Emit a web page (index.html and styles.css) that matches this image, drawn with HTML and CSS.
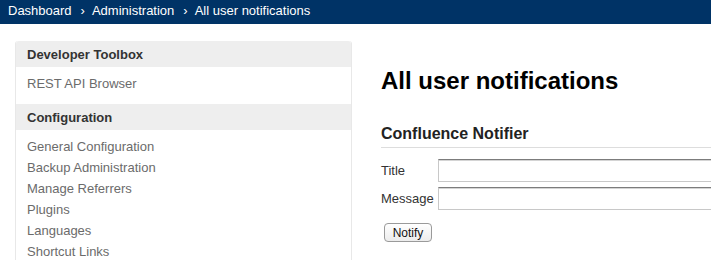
FILE: index.html
```html
<!DOCTYPE html>
<html>
<head>
<meta charset="utf-8">
<link rel="stylesheet" href="styles.css">
</head>
<body>
<div class="topbar">
  <span class="crumb">Dashboard</span><span class="sep">›</span><span class="crumb">Administration</span><span class="sep">›</span><span class="crumb">All user notifications</span>
</div>
<div class="layout">
  <nav class="sidebar">
    <div class="sb-head">Developer Toolbox</div>
    <ul class="sb-list">
      <li>REST API Browser</li>
    </ul>
    <div class="sb-head">Configuration</div>
    <ul class="sb-list">
      <li>General Configuration</li>
      <li>Backup Administration</li>
      <li>Manage Referrers</li>
      <li>Plugins</li>
      <li>Languages</li>
      <li>Shortcut Links</li>
    </ul>
  </nav>
  <main class="content">
    <h1 class="title">All user notifications</h1>
    <h2 class="section">Confluence Notifier</h2>
    <form class="form">
      <label class="lbl">Title</label><input class="field" type="text">
      <label class="lbl">Message</label><input class="field" type="text">
    </form>
    <button class="btn" type="button">Notify</button>
  </main>
</div>
</body>
</html>
```
FILE: styles.css
```css
html, body {
  margin: 0;
  padding: 0;
  background: #fff;
  overflow: hidden;
  font-family: "Liberation Sans", Arial, Helvetica, sans-serif;
}
.topbar {
  height: 24px;
  line-height: 21px;
  background: #003366;
  color: #fff;
  font-size: 13px;
  padding-left: 8px;
  white-space: nowrap;
}
.sep {
  margin: 0 7px 0 9px;
}
.layout {
  display: flex;
  align-items: flex-start;
  padding-top: 17px;
}
.sidebar {
  flex: 0 0 auto;
  width: 335px;
  margin-left: 15px;
  border: 1px solid #e8e8e8;
  border-bottom: none;
  border-top: none;
  border-radius: 3px 3px 0 0;
  background: #fff;
}
.sb-head {
  height: 25px;
  padding-top: 1px;
  line-height: 26px;
  background: #eeeeee;
  font-size: 13px;
  font-weight: bold;
  color: #333;
  padding-left: 11px;
}
.sb-head:first-child {
  border-radius: 3px 3px 0 0;
}
.sb-list {
  list-style: none;
  margin: 0;
  padding: 6px 0 10px 11px;
}
.sb-list li {
  font-size: 13px;
  line-height: 21px;
  color: #6b6b6b;
}
.content {
  flex: 0 0 auto;
  margin-left: 29px;
  width: 340px;
}
.title {
  margin: 26px 0 0 0;
  font-size: 24px;
  line-height: 28px;
  font-weight: bold;
  color: #000;
}
.section {
  margin: 29px 0 0 0;
  font-size: 16px;
  line-height: 20px;
  font-weight: bold;
  color: #222;
  padding-bottom: 3px;
  border-bottom: 1px solid #dddddd;
}
.form {
  display: grid;
  grid-template-columns: auto 1fr;
  column-gap: 4px;
  row-gap: 5px;
  align-items: center;
  margin-top: 11px;
}
.lbl {
  font-size: 13px;
  color: #333;
}
.field {
  box-sizing: border-box;
  height: 23px;
  width: 300px;
  margin: 0;
  border: 1px solid #c8c8c8;
  border-top-color: #7c7c7c;
  box-shadow: inset 0 1px 0 #d4d4d4;
  background: #fff;
}
.btn {
  display: block;
  margin: 13px 0 0 3px;
  height: 19px;
  width: 48px;
  padding: 0;
  font-family: "Liberation Sans", Arial, sans-serif;
  font-size: 12px;
  color: #111;
  border: 1px solid #9a9a9a;
  border-radius: 4px;
  background: linear-gradient(#ffffff, #ececec);
}
```
